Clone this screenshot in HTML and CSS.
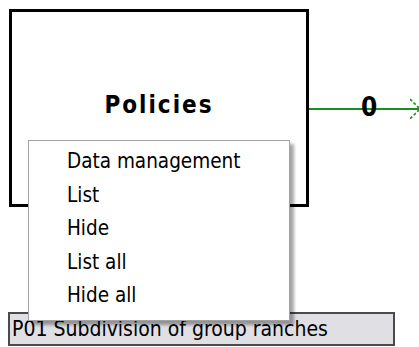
FILE: index.html
```html
<!DOCTYPE html>
<html lang="en">
<head>
  <meta charset="UTF-8" />
  <title>Policies</title>
  <link rel="stylesheet" href="styles.css">
</head>
<body>
  <div class="canvas">
    <div class="node">
      <span class="node-title">Policies</span>
    </div>

    <div class="edge">
      <span class="edge-count">0</span>
      <svg class="edge-arrow" width="12" height="22" viewBox="0 0 12 22">
        <polyline points="0,1 10,11 0,21" fill="none" stroke="#1b8f1b" stroke-width="1.6" stroke-dasharray="3 2"/>
      </svg>
    </div>

    <ul class="menu">
      <li>Data management</li>
      <li>List</li>
      <li>Hide</li>
      <li>List all</li>
      <li>Hide all</li>
    </ul>
  </div>

  <div class="status">P01 Subdivision of group ranches</div>
</body>
</html>
```

FILE: styles.css
```css
body {
  margin: 0;
  padding: 0;
  background: #fff;
  color: #000;
  font-family: "DejaVu Sans Condensed", "DejaVu Sans", sans-serif;
  overflow: hidden;
}
.canvas {
  position: relative;
  height: 312px;
}
.node {
  position: absolute;
  left: 9px;
  top: 9px;
  width: 294px;
  height: 192px;
  border: 3px solid #000;
  display: flex;
  align-items: center;
  justify-content: center;
}
.node-title {
  font-weight: bold;
  font-size: 24px;
  letter-spacing: 2px;
  margin-top: -6px;
}
.edge {
  position: absolute;
  left: 309px;
  top: 108px;
  width: 110px;
  height: 2px;
  background: #1b8f1b;
}
.edge-count {
  position: absolute;
  left: 52px;
  top: -16px;
  font-size: 26px;
  font-weight: bold;
  line-height: 30px;
}
.edge-arrow {
  position: absolute;
  left: 101px;
  top: -10px;
}
.menu {
  position: absolute;
  z-index: 2;
  left: 28px;
  top: 140px;
  width: 260px;
  margin: 0;
  padding: 4px 0 7px;
  list-style: none;
  background: #fff;
  border: 1px solid #a2a2a2;
  box-shadow: 4px 4px 3px rgba(0,0,0,0.35);
  font-size: 20.5px;
}
.menu li {
  height: 33.6px;
  line-height: 33.6px;
  padding-left: 38px;
}
.status {
  position: relative;
  z-index: 1;
  margin-left: 8px;
  width: 381px;
  height: 30px;
  border: 2px solid #4a4a4a;
  background: #e0dfe4;
  font-size: 21px;
  line-height: 30px;
  padding-left: 2px;
  white-space: nowrap;
}
```
